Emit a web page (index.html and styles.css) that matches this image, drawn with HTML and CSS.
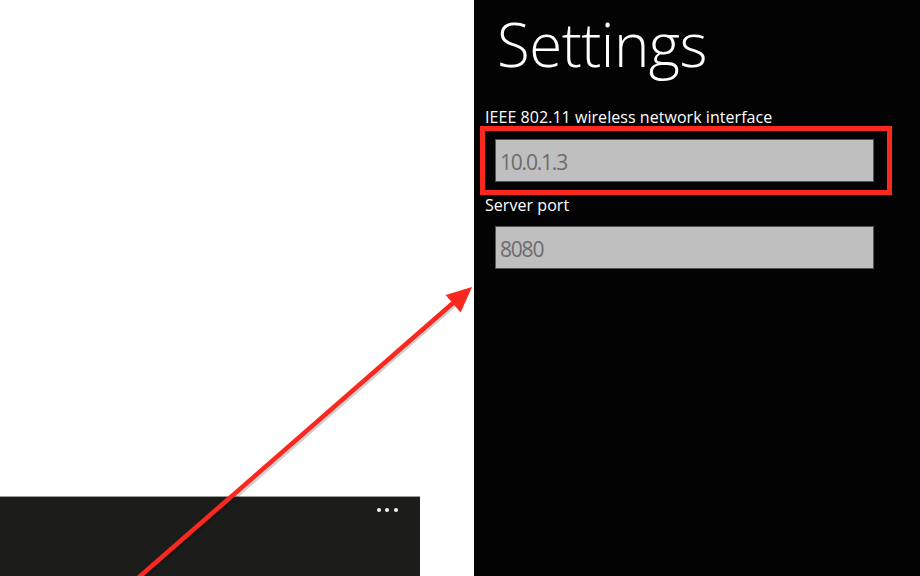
FILE: index.html
```html
<!DOCTYPE html>
<html lang="en">
<head>
<meta charset="utf-8">
<title>Settings</title>
<link rel="stylesheet" href="styles.css">
</head>
<body>
<div class="screen">
  <div class="phone-left">
    <div class="spacer"></div>
    <div class="app-bar">
      <span class="dots"><i></i><i></i><i></i></span>
    </div>
  </div>
  <div class="settings">
    <h1 class="title">Settings</h1>
    <label class="field-label">IEEE 802.11 wireless network interface</label>
    <div class="highlight">
      <div class="input">10.0.1.3</div>
    </div>
    <label class="field-label second">Server port</label>
    <div class="plain">
      <div class="input">8080</div>
    </div>
  </div>
  <svg class="arrow" width="920" height="576" viewBox="0 0 920 576">
    <line x1="140" y1="580" x2="455" y2="304" stroke="rgba(0,0,0,0.18)" stroke-width="5"/>
    <line x1="138" y1="578" x2="453" y2="303" stroke="#fb2820" stroke-width="4.6"/>
    <polygon points="472,287 445.6,295 460.6,312.5" fill="#fb2820"/>
  </svg>
</div>
</body>
</html>
```
FILE: styles.css
```css
html, body {
  margin: 0;
  padding: 0;
}
body {
  width: 920px;
  height: 576px;
  overflow: hidden;
  font-family: "Open Sans", "Noto Sans", sans-serif;
  background: #ffffff;
}
.screen {
  position: relative;
  display: flex;
  width: 920px;
  height: 576px;
}
.phone-left {
  width: 474px;
  display: flex;
  flex-direction: column;
  background: #ffffff;
}
.spacer {
  flex: 1;
}
.app-bar {
  width: 420px;
  height: 79px;
  background: #1c1d1b;
  border-top: 1px solid #9a9a9a;
  display: flex;
  justify-content: flex-end;
  align-items: flex-start;
}
.dots {
  display: flex;
  gap: 4.6px;
  margin: 11px 22px 0 0;
}
.dots i {
  display: block;
  width: 4px;
  height: 4px;
  border-radius: 50%;
  background: #f2f2f2;
}
.settings {
  flex: 1;
  background: #030303;
  padding-left: 6px;
  color: #ffffff;
}
.title {
  margin: 0 0 0 17px;
  font-weight: 300;
  font-size: 60px;
  line-height: 88px;
  height: 88px;
  letter-spacing: -0.5px;
}
.field-label {
  display: block;
  margin-left: 5px;
  font-size: 16px;
  line-height: 17px;
  height: 17px;
  margin-top: 21px;
  letter-spacing: 0.05px;
  white-space: nowrap;
}
.field-label.second {
  margin-top: 0;
  line-height: 20px;
  height: 20px;
}
.highlight {
  width: 379px;
  border: 5px solid #fb2820;
  padding: 8px 13px 8px 10px;
}
.plain {
  padding: 11px 0 0 15px;
}
.input {
  width: 373px;
  height: 41px;
  overflow: hidden;
  background: #bfbfbf;
  border: 1px solid #555555;
  color: #6c6c6c;
  font-size: 21px;
  line-height: 44px;
  padding-left: 4px;
  letter-spacing: -1.2px;
}
.arrow {
  position: absolute;
  left: 0;
  top: 0;
  pointer-events: none;
}
```
